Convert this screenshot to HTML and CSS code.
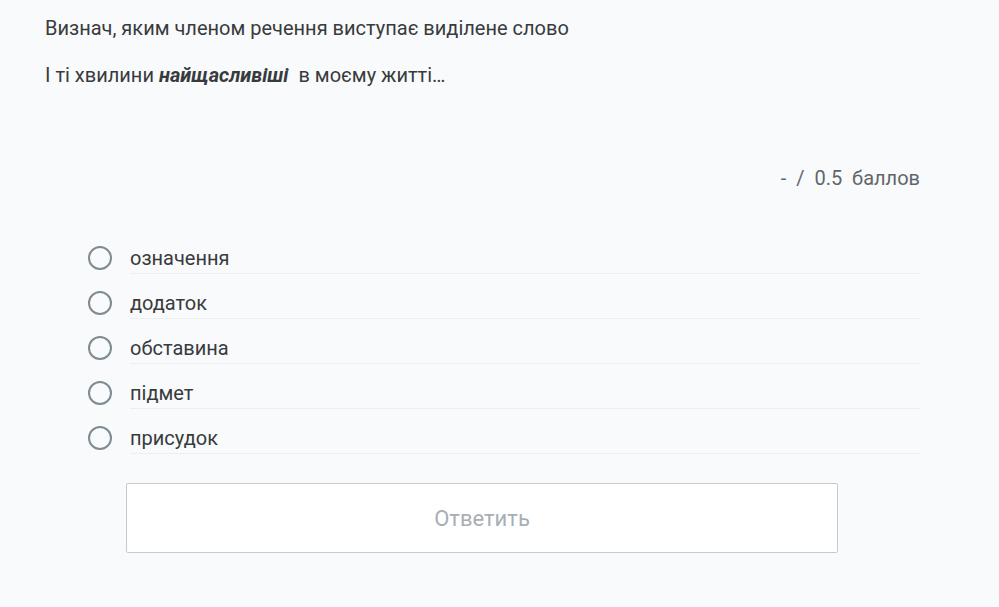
FILE: index.html
```html
<!DOCTYPE html>
<html lang="uk">
<head>
<meta charset="utf-8">
<link rel="stylesheet" href="styles.css">
</head>
<body>
<div class="page">
  <p class="title">Визнач, яким членом речення виступає виділене слово</p>
  <p class="sentence">І ті хвилини <b><i>найщасливіші</i></b>&nbsp; в моєму житті…</p>
  <div class="score">-&nbsp; /&nbsp; 0.5&nbsp; баллов</div>
  <ul class="options">
    <li class="option"><span class="radio"></span><span class="label">означення</span></li>
    <li class="option"><span class="radio"></span><span class="label">додаток</span></li>
    <li class="option"><span class="radio"></span><span class="label">обставина</span></li>
    <li class="option"><span class="radio"></span><span class="label">підмет</span></li>
    <li class="option"><span class="radio"></span><span class="label">присудок</span></li>
  </ul>
  <div class="actions"><button class="answer">Ответить</button></div>
</div>
</body>
</html>
```
FILE: styles.css
```css
html, body {
  margin: 0;
  padding: 0;
  background: #f9fafb;
}
body {
  font-family: Roboto, "Liberation Sans", sans-serif;
  color: #383b3d;
  width: 999px;
  height: 607px;
  overflow: hidden;
}
.page {
  padding: 15px 79px 0 45px;
}
.title {
  margin: 0;
  font-size: 20px;
  line-height: 26px;
}
.sentence {
  margin: 21px 0 0;
  font-size: 20px;
  line-height: 26px;
}
.sentence b {
  font-weight: 700;
}
.score {
  margin-top: 77px;
  text-align: right;
  font-size: 20px;
  line-height: 26px;
  color: #5f666b;
}
.options {
  list-style: none;
  margin: 44px 0 0;
  padding: 0 0 0 43px;
}
.option {
  display: flex;
  align-items: center;
  height: 45px;
}
.radio {
  flex: none;
  width: 20px;
  height: 20px;
  border: 2px solid #7e8b92;
  border-radius: 50%;
  margin-right: 18px;
}
.label {
  flex: 1;
  font-size: 20px;
  line-height: 26px;
  padding: 2px 0 2px;
  border-bottom: 1px solid #eceff1;
  margin-top: 1px;
}
.actions {
  margin-top: 23px;
  padding-left: 81px;
}
.answer {
  display: block;
  width: 712px;
  height: 70px;
  background: #ffffff;
  border: 1px solid #c6cacc;
  border-radius: 2px;
  font-family: Roboto, "Liberation Sans", sans-serif;
  font-size: 22px;
  color: #a7afb3;
  cursor: pointer;
}
```
